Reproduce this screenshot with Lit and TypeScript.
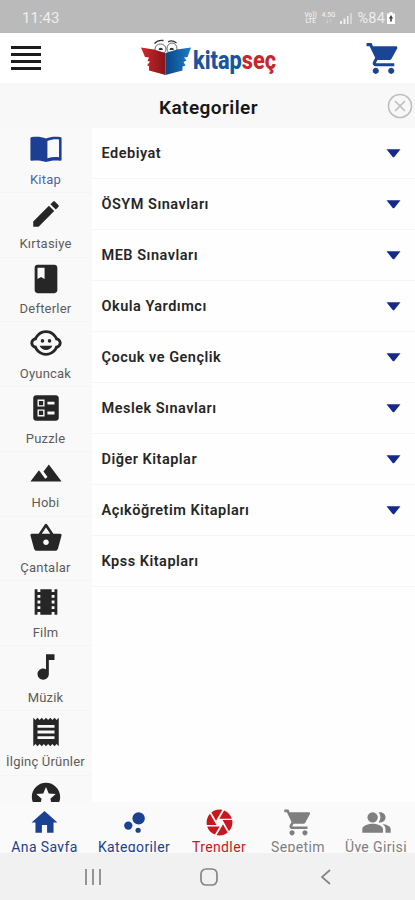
import { LitElement, html, svg, css } from "lit";
import { customElement } from "lit/decorators.js";

const circle = (cx: number, cy: number, r: number) => svg`<circle cx=${cx} cy=${cy} r=${r} />`;
const path = (d: string) => svg`<path d=${d} />`;

const CART = path("M7 18c-1.1 0-1.99.9-1.99 2S5.9 22 7 22s2-.9 2-2-.9-2-2-2zM1 2v2h2l3.6 7.59-1.35 2.45c-.16.28-.25.61-.25.96 0 1.1.9 2 2 2h12v-2H7.42c-.14 0-.25-.11-.25-.25l.03-.12.9-1.63h7.45c.75 0 1.41-.41 1.75-1.03l3.58-6.49c.08-.14.12-.31.12-.48 0-.55-.45-1-1-1H5.21l-.94-2H1zm16 16c-1.1 0-1.99.9-1.99 2s.89 2 1.99 2 2-.9 2-2-.9-2-2-2z");

const departments = [
  { label: "Kitap", active: true, icon: path("M2 3.6C5.4 3.1 9 3.3 12 4.6 15 3.3 18.6 3.1 22 3.6c.6.1 1 .4 1 1V19.4c0 .6-.4 1-1 .9-3.1-.5-6.2-.3-8.7.6-.8.3-1.8.3-2.6 0-2.5-.9-5.6-1.1-8.7-.6-.6.1-1-.3-1-.9V4.6c0-.6.4-.9 1-1zM13 6.3v12.2c2.6-.8 5.4-1 8.2-.7V5.3c-2.8-.3-5.600 0-8.200 1z") },
  { label: "Kırtasiye", icon: path("M3 17.25V21h3.75L17.81 9.94l-3.75-3.75L3 17.25zM20.71 7.04c.39-.39.39-1.02 0-1.41l-2.34-2.34c-.39-.39-1.02-.39-1.41 0l-1.83 1.83 3.75 3.75 1.83-1.83z") },
  { label: "Defterler", icon: path("M18 2H6c-1.1 0-2 .9-2 2v16c0 1.1.9 2 2 2h12c1.1 0 2-.9 2-2V4c0-1.1-.9-2-2-2zM6 4h5v8l-2.5-1.5L6 12V4z") },
  { label: "Oyuncak", icon: [circle(14.5, 10.5, 1.25), circle(9.5, 10.5, 1.25), path("M22.94 12.66c.04-.21.06-.43.06-.66s-.02-.45-.06-.66c-.25-1.51-1.36-2.74-2.81-3.17-.53-1.12-1.28-2.1-2.19-2.91C16.36 3.85 14.28 3 12 3s-4.36.85-5.94 2.26c-.92.81-1.67 1.8-2.19 2.91-1.45.43-2.56 1.65-2.81 3.17-.04.21-.06.43-.06.66s.02.45.06.66c.25 1.51 1.36 2.74 2.81 3.17.52 1.11 1.27 2.09 2.17 2.89C7.62 20.14 9.71 21 12 21s4.38-.86 5.97-2.28c.9-.8 1.65-1.79 2.17-2.89 1.44-.43 2.55-1.65 2.8-3.17zM19 14c-.1 0-.19-.02-.29-.03-.2.67-.49 1.29-.86 1.86C16.6 17.74 14.45 19 12 19s-4.6-1.26-5.85-3.17c-.37-.57-.66-1.19-.86-1.86-.1.01-.19.03-.29.03-1.1 0-2-.9-2-2s.9-2 2-2c.1 0 .19.02.29.03.2-.67.49-1.29.86-1.86C7.4 6.26 9.55 5 12 5s4.6 1.26 5.85 3.17c.37.57.66 1.19.86 1.86.1-.01.19-.03.29-.03 1.1 0 2 .9 2 2s-.9 2-2 2zM7.5 14c.76 1.77 2.49 3 4.5 3s3.74-1.23 4.5-3h-9z")] },
  { label: "Puzzle", icon: path("M13 9.5h5v-2h-5v2zm0 7h5v-2h-5v2zm6 4.5H5c-1.1 0-2-.9-2-2V5c0-1.1.9-2 2-2h14c1.1 0 2 .9 2 2v14c0 1.1-.9 2-2 2zM6 11h5V6H6v5zm1-4h3v3H7V7zM6 18h5v-5H6v5zm1-4h3v3H7v-3z") },
  { label: "Hobi", icon: path("M14 6l-3.75 5 2.85 3.8-1.6 1.2C9.81 13.75 7 10 7 10l-6 8h22L14 6z") },
  { label: "Çantalar", icon: path("M17.21 9l-4.38-6.56c-.19-.28-.51-.42-.83-.42-.32 0-.64.14-.83.43L6.79 9H2c-.55 0-1 .45-1 1 0 .09.01.18.04.27l2.54 9.27c.23.84 1 1.46 1.92 1.46h13c.92 0 1.69-.62 1.93-1.46l2.54-9.27L23 10c0-.55-.45-1-1-1h-4.79zM9 9l3-4.4L15 9H9zm3 8c-1.1 0-2-.9-2-2s.9-2 2-2 2 .9 2 2-.9 2-2 2z") },
  { label: "Film", icon: path("M18 3v2h-2V3H8v2H6V3H4v18h2v-2h2v2h8v-2h2v2h2V3h-2zM8 17H6v-2h2v2zm0-4H6v-2h2v2zm0-4H6V7h2v2zm10 8h-2v-2h2v2zm0-4h-2v-2h2v2zm0-4h-2V7h2v2z") },
  { label: "Müzik", icon: path("M12 3v10.55c-.59-.34-1.27-.55-2-.55-2.21 0-4 1.79-4 4s1.79 4 4 4 4-1.79 4-4V7h4V3h-6z") },
  { label: "İlginç Ürünler", icon: path("M18 17H6v-2h12v2zm0-4H6v-2h12v2zm0-4H6V7h12v2zM3 22l1.5-1.5L6 22l1.5-1.5L9 22l1.5-1.5L12 22l1.5-1.5L15 22l1.5-1.5L18 22l1.5-1.5L21 22V2l-1.5 1.5L18 2l-1.5 1.5L15 2l-1.5 1.5L12 2l-1.5 1.5L9 2 7.5 3.5 6 2 4.5 3.5 3 2v20z") },
  { label: "", icon: path("M11.99 2C6.47 2 2 6.48 2 12s4.47 10 9.99 10C17.52 22 22 17.52 22 12S17.52 2 11.99 2zm4.24 16L12 15.45 7.77 18l1.12-4.81-3.73-3.23 4.92-.42L12 5l1.92 4.53 4.92.42-3.73 3.23L16.23 18z") },
];

const categories = [
  "Edebiyat", "ÖSYM Sınavları", "MEB Sınavları", "Okula Yardımcı", "Çocuk ve Gençlik",
  "Meslek Sınavları", "Diğer Kitaplar", "Açıköğretim Kitapları", "Kpss Kitapları",
];

const tabs = [
  { label: "Ana Sayfa", tone: "blue", icon: path("M10 20v-6h4v6h5v-8h3L12 3 2 12h3v8z") },
  { label: "Kategoriler", tone: "blue", icon: [circle(7.2, 14.4, 3.2), circle(14.8, 18, 2), circle(15.2, 8.8, 4.8)] },
  { label: "Trendler", tone: "red", icon: path("M9.4 10.5l4.77-8.26C13.47 2.09 12.75 2 12 2c-2.4 0-4.6.85-6.32 2.25l3.66 6.35.06-.1zM21.54 9c-.92-2.92-3.15-5.26-6-6.34L11.88 9h9.66zm.26 1h-7.49l.29.5 4.76 8.25C21 16.97 22 14.61 22 12c0-.69-.07-1.35-.2-2zM8.54 12l-3.9-6.75C3.01 7.03 2 9.39 2 12c0 .69.07 1.35.2 2h7.49l-1.15-2zm-6.08 3c.92 2.92 3.15 5.26 6 6.34L12.12 15H2.46zm11.27 0l-3.9 6.76c.7.15 1.42.24 2.17.24 2.4 0 4.6-.85 6.32-2.25l-3.66-6.35-.93 1.6z") },
  { label: "Sepetim", tone: "gray", icon: CART },
  { label: "Üye Girişi", tone: "gray", icon: [circle(9, 8, 4), path("M16.67 13.13C18.04 14.06 19 15.32 19 17v3h4v-3c0-2.18-3.57-3.47-6.33-3.87zM15 12c2.21 0 4-1.79 4-4s-1.79-4-4-4c-.47 0-.91.1-1.33.24C14.5 5.27 15 6.58 15 8s-.5 2.73-1.33 3.76c.42.14.86.24 1.33.24zM9 13c-2.67 0-8 1.34-8 4v3h16v-3c0-2.66-5.33-4-8-4z")] },
];

@customElement("app-root")
export class AppRoot extends LitElement {
  static styles = css`
    :host { display: flex; flex-direction: column; width: 415px; height: 900px; overflow: hidden; background: #fefefe; font-family: Roboto, "Liberation Sans", sans-serif; color: #1c1c1e; }
    * { box-sizing: border-box; }
    svg { display: block; fill: currentColor; flex: none; }
    .status { height: 33px; flex: none; background: #bababa; color: #eee; display: flex; align-items: center; justify-content: space-between; padding: 3px 20px 0 22px; font-size: 15px; }
    .signals { display: flex; align-items: center; gap: 5px; }
    .tiny { font-size: 6.5px; line-height: 6px; text-align: center; font-weight: 500; }
    .percent { font-size: 14.5px; letter-spacing: .2px; }
    .signals .battery { margin-left: -3px; color: #fff; }
    .header { height: 50px; flex: none; display: grid; grid-template-columns: 130px 1fr auto; align-items: center; background: #fff; padding: 0 15px 0 11px; }
    .menu { display: flex; flex-direction: column; gap: 4.1px; width: 30px; }
    .menu i { height: 3px; background: #1c1c1c; }
    .cart { color: #1a4594; margin-right: -2px; }
    .title { height: 45px; flex: none; background: #f8f8f8; display: grid; grid-template-columns: 40px 1fr 38px; align-items: center; }
    .title h1 { grid-column: 2; margin: 4px 0 0; text-align: center; font-size: 19px; line-height: 24px; font-weight: 600; letter-spacing: .45px; color: #171717; }
    .close { fill: none; stroke: #bdbdbd; stroke-width: 1.6; justify-self: center; margin-left: 8px; }
    .body { flex: 1; min-height: 0; display: flex; overflow: hidden; }
    .rail { width: 92px; flex: none; background: #f9f9f9; overflow: hidden; }
    .dept { height: 64.75px; display: flex; flex-direction: column; align-items: center; padding: 4px 1px 0 0; border-bottom: 1px solid #f5f5f5; color: #262626; }
    .dept span { margin-top: 4.5px; font-size: 13px; line-height: 18px; color: #5c5c5c; letter-spacing: .2px; white-space: nowrap; }
    .dept.active { color: #1c3f94; }
    .dept.active span { color: #4d64a8; }
    .list { flex: 1; }
    .row { height: 51px; display: flex; align-items: center; justify-content: space-between; padding: 0 14px 0 9.5px; border-bottom: 1px solid #f5f5f5; font-size: 14.5px; font-weight: 600; letter-spacing: .5px; color: #262626; }
    .row svg { color: #15298a; margin-top: 1px; }
    .tabs { height: 51px; flex: none; overflow: hidden; background: #fafafa; display: grid; grid-template-columns: 89px 90px 80px 78px 78px; }
    .tab { height: 50px; overflow: hidden; padding-top: 5px; display: flex; flex-direction: column; align-items: center; font-size: 14px; line-height: 18px; letter-spacing: .38px; white-space: nowrap; }
    .blue { color: #1b4192; }
    .red { color: #c8171e; }
    .gray { color: #7f7f7f; }
    .system { height: 47px; flex: none; background: #f1f1f1; display: grid; grid-template-columns: 1fr 1fr 1fr; align-items: center; justify-items: center; padding: 1px 31px 0 35px; }
    .system svg { fill: none; stroke: #858585; stroke-width: 1.7; }
    .word { font-family: Roboto, sans-serif; font-weight: 800; font-size: 26.5px; }
  `;

  private icon(content: unknown, size: number, cls = "") {
    return html`<svg class=${cls} width=${size} height=${size} viewBox="0 0 24 24">${content}</svg>`;
  }

  private logo() {
    return html`<svg width="150" height="44" viewBox="0 0 150 44">
      <defs>
        <linearGradient id="red" x1="0" x2="1"><stop offset="0" stop-color="#d0292b" /><stop offset="1" stop-color="#861419" /></linearGradient>
        <linearGradient id="blue" x1="0" x2="1"><stop offset="0" stop-color="#0a4686" /><stop offset="1" stop-color="#1e7cc6" /></linearGradient>
      </defs>
      <g fill="#fff" stroke="#666" stroke-width="1">
        <ellipse cx="19.5" cy="13" rx="5.5" ry="5" /><ellipse cx="31" cy="12.5" rx="5" ry="5.5" />
        <path d="M13.5 7.5Q17 3.5 22.5 4.500M27 6Q31 3.500 35.500 7" fill="none" stroke="#333" stroke-width="1.3" />
      </g>
      <path d="M17.5 14a2.2 2.2 0 1 1 4.4 0zM28.5 14a2.2 2.2 0 1 1 4.4 0z" fill="#333" />
      <path fill="url(#red)" d="M0 11.5L13 13.5 24.5 17V39L8 34.5V30l-2-.5 3-4-2.5-.5 1.5-3.5-4-.5z" />
      <path fill="url(#blue)" d="M50 11.5L36 13.5 24.5 17V39L41.5 34.5V30.5l3-1-2-3.5 3-1.5-2.5-3 3.500-.5z" />
      <text class="word" x="52" y="33" textLength="83" lengthAdjust="spacingAndGlyphs" fill="#18549f">kitap<tspan fill="#c9252b">seç</tspan></text>
    </svg>`;
  }

  render() {
    return html`
      <div class="status">
        <span>11:43</span>
        <div class="signals">
          <div class="tiny">Vo))<br />LTE</div>
          <div class="tiny">4.5G<br />↓↑</div>
          <svg width="12" height="11" viewBox="0 0 12 11"><path d="M0 8h2v3H0zM3.5 5.5h2V11h-2zM7 3h1.5v8H7zM10.5 0h1v11h-1z" /></svg>
          <span class="percent">%84</span>
          <svg class="battery" width="8" height="12" viewBox="0 0 8 12"><path d="M2.5 0h3v1.5H8V12H0V1.5h2.5z" /><path d="M4 3L1.800 6.500h1.400v3h1.600v-3h1.400z" fill="#444" /></svg>
        </div>
      </div>
      <div class="header">
        <div class="menu"><i></i><i></i><i></i><i></i></div>
        ${this.logo()}
        ${this.icon(CART, 37, "cart")}
      </div>
      <div class="title">
        <h1>Kategoriler</h1>
        <svg class="close" width="26" height="26" viewBox="0 0 26 26"><circle cx="13" cy="13" r="11.5" /><path d="M8 8l10 10M18 8L8 18" /></svg>
      </div>
      <div class="body">
        <div class="rail">
          ${departments.map((d) => html`<div class="dept ${d.active ? "active" : ""}">${this.icon(d.icon, 34)}<span>${d.label}</span></div>`)}
        </div>
        <div class="list">
          ${categories.map((c, i) => html`<div class="row">${c}${i < categories.length - 1
            ? html`<svg width="15" height="9" viewBox="0 0 15 9"><path d="M.5.3h14L8.500 7.800q-1 1-2 0z" /></svg>` : null}</div>`)}
        </div>
      </div>
      <div class="tabs">
        ${tabs.map((t) => html`<div class="tab ${t.tone}">${this.icon(t.icon, 31)}<span>${t.label}</span></div>`)}
      </div>
      <div class="system">
        <svg width="18" height="18" viewBox="0 0 18 18"><path d="M2 1v16M9 1v16M16 1v16" /></svg>
        <svg width="18" height="18" viewBox="0 0 18 18"><rect x="1" y="1" width="16" height="16" rx="5" /></svg>
        <svg width="12" height="18" viewBox="0 0 12 18"><path d="M10 2L2 9l8 7" /></svg>
      </div>
    `;
  }
}
